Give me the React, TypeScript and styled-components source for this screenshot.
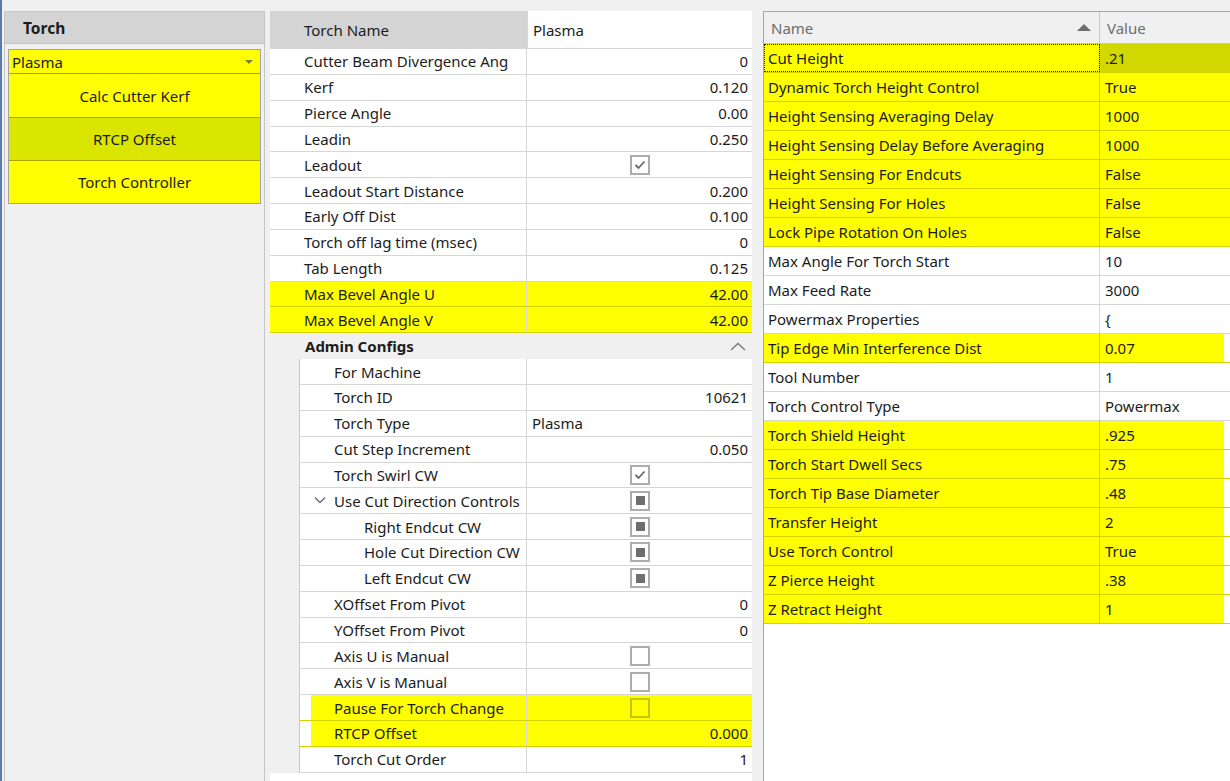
import React, { FC } from "react";
import styled, { createGlobalStyle, css } from "styled-components";

const GlobalStyle = createGlobalStyle`
  body {
    margin: 0;
    font-family: "Noto Sans", "Open Sans", sans-serif;
    font-size: 15px;
    color: #1c1c1c;
  }
  * {
    box-sizing: border-box;
  }
`;

const YELLOW = "#ffff00";
const OLIVE_LINE = "#d2d200";
const GRID_LINE = "#d6d6d6";

const Page = styled.div`
  display: flex;
  width: 1230px;
  height: 781px;
  overflow: hidden;
  padding-top: 11px;
  background: #f0f0f0;
  border-left: 2px solid #5b7bab;
`;

/* ---------- left: torch list ---------- */

const TorchPanel = styled.section`
  width: 261px;
  margin-left: 2px;
  flex-shrink: 0;
  border: 1px solid #c6c6c6;
  border-bottom: none;
`;

const PanelHeader = styled.div`
  height: 32px;
  display: flex;
  align-items: center;
  padding-left: 18px;
  background: #d4d4d4;
  border-bottom: 1px solid #c6c6c6;
  font-weight: 700;
  font-size: 15.5px;
`;

const ActionStack = styled.div`
  margin: 5px 3px 0 3px;
  border: 1px solid #a4a4a4;
`;

const Select = styled.div`
  height: 24px;
  display: flex;
  align-items: center;
  justify-content: space-between;
  padding: 0 7px 0 3px;
  background: ${YELLOW};
  border-bottom: 1px solid #a2a200;

  &::after {
    content: "";
    border-left: 4px solid transparent;
    border-right: 4px solid transparent;
    border-top: 4px solid #7a7a4a;
  }
`;

const ActionButton = styled.div<{ $active?: boolean }>`
  height: 43px;
  display: flex;
  align-items: center;
  justify-content: center;
  background: ${(p) => (p.$active ? "#dbe600" : YELLOW)};

  & + & {
    border-top: 1px solid #a8a800;
  }
`;

/* ---------- middle: property sheet ---------- */

const SheetPanel = styled.section`
  width: 482px;
  margin-left: 5px;
  flex-shrink: 0;
  display: flex;
  flex-direction: column;
  background: #fff;
`;

const SheetHeader = styled.div`
  height: 38px;
  display: grid;
  grid-template-columns: 257px 1fr;
  border-bottom: 1px solid ${GRID_LINE};
`;

const HeaderName = styled.div`
  display: flex;
  align-items: center;
  padding-left: 34px;
  background: #d4d4d4;
`;

const HeaderValue = styled.div`
  display: flex;
  align-items: center;
  padding-left: 5px;
  border-left: 1px solid ${GRID_LINE};
`;

const PropRow = styled.div<{ $nameWidth: number; $hl?: "full" | "inset" }>`
  height: 25.85px;
  display: grid;
  grid-template-columns: ${(p) => p.$nameWidth}px 1fr;
  border-bottom: 1px solid ${GRID_LINE};
  ${(p) =>
    p.$hl === "full" &&
    css`
      background: ${YELLOW};
      border-bottom-color: ${OLIVE_LINE};
    `}
  ${(p) =>
    p.$hl === "inset" &&
    css`
      background: linear-gradient(to right, #fff 11px, ${YELLOW} 11px);
      border-bottom-color: ${OLIVE_LINE};
    `}
`;

const PropName = styled.div<{ $pad: number }>`
  display: flex;
  align-items: center;
  padding-left: ${(p) => p.$pad}px;
  border-right: 1px solid ${GRID_LINE};
  white-space: nowrap;
  position: relative;
`;

const PropValue = styled.div<{ $align: "left" | "right" | "center" }>`
  display: flex;
  align-items: center;
  justify-content: ${(p) =>
    p.$align === "left" ? "flex-start" : p.$align === "center" ? "center" : "flex-end"};
  padding: 0 4px 0 5px;
`;

const Expander = styled.svg`
  position: absolute;
  left: 14px;
  top: 8px;
`;

const SectionHeader = styled.div`
  height: 25.85px;
  display: flex;
  align-items: center;
  justify-content: space-between;
  padding: 0 6px 0 35px;
  background: #f0f0f0;
  font-weight: 700;
`;

const NestedGroup = styled.div`
  padding-left: 29px;
  background: #f0f0f0;
`;

const NestedRows = styled.div`
  background: #fff;
  border-left: 1px solid #c8c8c8;
`;

const SheetFooter = styled.div`
  flex: 1;
  background: #fff;
`;

const Box = styled.span<{ $hl?: boolean }>`
  width: 20px;
  height: 20px;
  display: inline-flex;
  align-items: center;
  justify-content: center;
  border: 2px solid ${(p) => (p.$hl ? "#c4c400" : "#adadad")};
  background: ${(p) => (p.$hl ? "transparent" : "#fff")};
`;

const Dot = styled.span`
  width: 9px;
  height: 9px;
  background: #6e6e6e;
`;

type CheckState = "on" | "off" | "mixed";

const Checkbox: FC<{ state: CheckState; hl?: boolean }> = ({ state, hl }) => (
  <Box $hl={hl}>
    {state === "on" && (
      <svg width="12" height="10" viewBox="0 0 12 10">
        <polyline points="1.5,5 4.5,8 10.5,1.5" fill="none" stroke="#6a6a6a" strokeWidth="1.8" />
      </svg>
    )}
    {state === "mixed" && <Dot />}
  </Box>
);

type Prop = {
  name: string;
  value?: string;
  check?: CheckState;
  align?: "left" | "right";
  level?: number;
  expander?: boolean;
  hl?: "full" | "inset";
};

const topProps: Prop[] = [
  { name: "Cutter Beam Divergence Ang", value: "0" },
  { name: "Kerf", value: "0.120" },
  { name: "Pierce Angle", value: "0.00" },
  { name: "Leadin", value: "0.250" },
  { name: "Leadout", check: "on" },
  { name: "Leadout Start Distance", value: "0.200" },
  { name: "Early Off Dist", value: "0.100" },
  { name: "Torch off lag time (msec)", value: "0" },
  { name: "Tab Length", value: "0.125" },
  { name: "Max Bevel Angle U", value: "42.00", hl: "full" },
  { name: "Max Bevel Angle V", value: "42.00", hl: "full" },
];

const adminProps: Prop[] = [
  { name: "For Machine", value: "" },
  { name: "Torch ID", value: "10621" },
  { name: "Torch Type", value: "Plasma", align: "left" },
  { name: "Cut Step Increment", value: "0.050" },
  { name: "Torch Swirl CW", check: "on" },
  { name: "Use Cut Direction Controls", check: "mixed", expander: true },
  { name: "Right Endcut CW", check: "mixed", level: 1 },
  { name: "Hole Cut Direction CW", check: "mixed", level: 1 },
  { name: "Left Endcut CW", check: "mixed", level: 1 },
  { name: "XOffset From Pivot", value: "0" },
  { name: "YOffset From Pivot", value: "0" },
  { name: "Axis U is Manual", check: "off" },
  { name: "Axis V is Manual", check: "off" },
  { name: "Pause For Torch Change", check: "off", hl: "inset" },
  { name: "RTCP Offset", value: "0.000", hl: "inset" },
  { name: "Torch Cut Order", value: "1" },
];

const PropLine: FC<{ prop: Prop; nameWidth: number; pad: number }> = ({ prop, nameWidth, pad }) => (
  <PropRow $nameWidth={nameWidth} $hl={prop.hl}>
    <PropName $pad={pad + (prop.level ?? 0) * 30}>
      {prop.expander && (
        <Expander width="12" height="8" viewBox="0 0 12 8">
          <polyline points="1,1.5 6,6.5 11,1.5" fill="none" stroke="#6a6a6a" strokeWidth="1.3" />
        </Expander>
      )}
      {prop.name}
    </PropName>
    <PropValue $align={prop.check ? "center" : prop.align ?? "right"}>
      {prop.check ? <Checkbox state={prop.check} hl={!!prop.hl} /> : prop.value}
    </PropValue>
  </PropRow>
);

/* ---------- right: name/value grid ---------- */

const GridPanel = styled.section`
  width: 470px;
  margin-left: 11px;
  flex-shrink: 0;
  display: flex;
  flex-direction: column;
  border-left: 1px solid #a8a8a8;
  border-top: 1px solid #a8a8a8;
  background: #fff;
`;

const GridHeader = styled.div`
  height: 32px;
  display: grid;
  grid-template-columns: 336px 1fr;
  background: #f0f0f0;
  border-bottom: 1px solid #c8c8c8;
  color: #6d6d6d;
`;

const ColHead = styled.div<{ $divider?: boolean }>`
  display: flex;
  align-items: center;
  justify-content: space-between;
  padding: 0 8px 0 7px;
  border-right: ${(p) => (p.$divider ? "1px solid #c8c8c8" : "none")};
`;

const SortArrow = styled.span`
  border-left: 7px solid transparent;
  border-right: 7px solid transparent;
  border-bottom: 7px solid #6d6d6d;
`;

type Mark = "full" | "part" | undefined;

const DataRow = styled.div<{ $mark: Mark }>`
  height: 29px;
  display: grid;
  grid-template-columns: 336px 1fr;
  border-bottom: 1px solid ${(p) => (p.$mark ? OLIVE_LINE : GRID_LINE)};
  ${(p) =>
    p.$mark === "full" &&
    css`
      background: ${YELLOW};
    `}
  ${(p) =>
    p.$mark === "part" &&
    css`
      background: linear-gradient(to right, ${YELLOW} 460px, #fff 460px);
    `}
`;

const DataName = styled.div<{ $mark: Mark; $focus?: boolean }>`
  display: flex;
  align-items: center;
  padding-left: 4px;
  border-right: 1px solid ${(p) => (p.$mark ? OLIVE_LINE : GRID_LINE)};
  ${(p) =>
    p.$focus &&
    css`
      outline: 1px dotted #202020;
      outline-offset: -1px;
    `}
`;

const DataValue = styled.div<{ $selected?: boolean }>`
  display: flex;
  align-items: center;
  padding-left: 5px;
  background: ${(p) => (p.$selected ? "#d0d800" : "transparent")};
`;

type Entry = { name: string; value: string; mark?: Mark };

const entries: Entry[] = [
  { name: "Cut Height", value: ".21", mark: "full" },
  { name: "Dynamic Torch Height Control", value: "True", mark: "full" },
  { name: "Height Sensing Averaging Delay", value: "1000", mark: "full" },
  { name: "Height Sensing Delay Before Averaging", value: "1000", mark: "full" },
  { name: "Height Sensing For Endcuts", value: "False", mark: "full" },
  { name: "Height Sensing For Holes", value: "False", mark: "full" },
  { name: "Lock Pipe Rotation On Holes", value: "False", mark: "full" },
  { name: "Max Angle For Torch Start", value: "10" },
  { name: "Max Feed Rate", value: "3000" },
  { name: "Powermax Properties", value: "{" },
  { name: "Tip Edge Min Interference Dist", value: "0.07", mark: "part" },
  { name: "Tool Number", value: "1" },
  { name: "Torch Control Type", value: "Powermax" },
  { name: "Torch Shield Height", value: ".925", mark: "part" },
  { name: "Torch Start Dwell Secs", value: ".75", mark: "part" },
  { name: "Torch Tip Base Diameter", value: ".48", mark: "part" },
  { name: "Transfer Height", value: "2", mark: "part" },
  { name: "Use Torch Control", value: "True", mark: "part" },
  { name: "Z Pierce Height", value: ".38", mark: "part" },
  { name: "Z Retract Height", value: "1", mark: "part" },
];

const App: FC = () => {
  return (
    <Page>
      <GlobalStyle />

      <TorchPanel>
        <PanelHeader>Torch</PanelHeader>
        <ActionStack>
          <Select>Plasma</Select>
          <ActionButton>Calc Cutter Kerf</ActionButton>
          <ActionButton $active>RTCP Offset</ActionButton>
          <ActionButton>Torch Controller</ActionButton>
        </ActionStack>
      </TorchPanel>

      <SheetPanel>
        <SheetHeader>
          <HeaderName>Torch Name</HeaderName>
          <HeaderValue>Plasma</HeaderValue>
        </SheetHeader>
        {topProps.map((p) => (
          <PropLine key={p.name} prop={p} nameWidth={257} pad={34} />
        ))}
        <SectionHeader>
          Admin Configs
          <svg width="16" height="9" viewBox="0 0 16 9">
            <polyline points="1,8 8,1.5 15,8" fill="none" stroke="#7a7a7a" strokeWidth="1.3" />
          </svg>
        </SectionHeader>
        <NestedGroup>
          <NestedRows>
            {adminProps.map((p) => (
              <PropLine key={p.name} prop={p} nameWidth={227} pad={34} />
            ))}
          </NestedRows>
        </NestedGroup>
        <SheetFooter />
      </SheetPanel>

      <GridPanel>
        <GridHeader>
          <ColHead $divider>
            Name
            <SortArrow />
          </ColHead>
          <ColHead>Value</ColHead>
        </GridHeader>
        {entries.map((e, i) => (
          <DataRow key={e.name} $mark={e.mark}>
            <DataName $mark={e.mark} $focus={i === 0}>
              {e.name}
            </DataName>
            <DataValue $selected={i === 0}>{e.value}</DataValue>
          </DataRow>
        ))}
      </GridPanel>
    </Page>
  );
};

export default App;
